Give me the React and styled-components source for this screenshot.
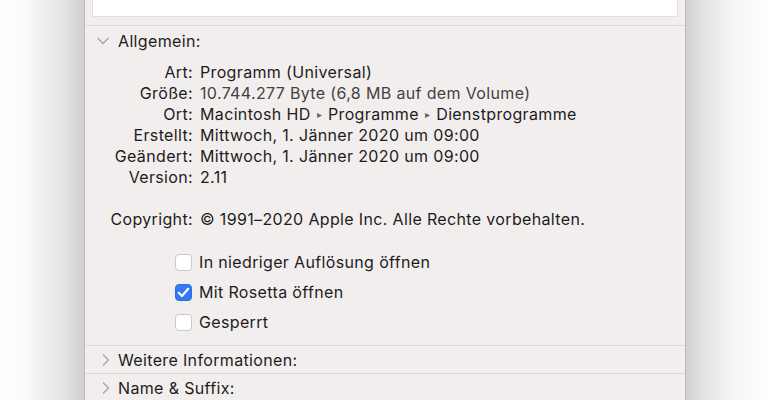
import React from 'react';
import styled, { createGlobalStyle } from 'styled-components';

const GlobalStyle = createGlobalStyle`
  html, body {
    margin: 0;
    padding: 0;
    background: #ffffff;
  }
  body {
    font-family: Inter, "Noto Sans", "Liberation Sans", sans-serif;
    -webkit-font-smoothing: antialiased;
  }
`;

const info = [
  { label: 'Art', value: 'Programm (Universal)' },
  { label: 'Größe', value: '10.744.277 Byte (6,8 MB auf dem Volume)', muted: true },
  { label: 'Ort', path: ['Macintosh HD', 'Programme', 'Dienstprogramme'] },
  { label: 'Erstellt', value: 'Mittwoch, 1. Jänner 2020 um 09:00' },
  { label: 'Geändert', value: 'Mittwoch, 1. Jänner 2020 um 09:00' },
  { label: 'Version', value: '2.11' },
  { spacer: true },
  { label: 'Copyright', value: '© 1991–2020 Apple Inc. Alle Rechte vorbehalten.' }
];

const options = [
  { label: 'In niedriger Auflösung öffnen', checked: false },
  { label: 'Mit Rosetta öffnen', checked: true },
  { label: 'Gesperrt', checked: false }
];

const Chevron = ({ open }) => (
  <ChevronBox open={open}>
    {open ? (
      <svg width="12" height="8" viewBox="0 0 12 8">
        <path d="M1 1.5 L6 6.5 L11 1.5" fill="none" stroke="#a9a5a5" strokeWidth="1.4" strokeLinecap="round" strokeLinejoin="round" />
      </svg>
    ) : (
      <svg width="8" height="12" viewBox="0 0 8 12">
        <path d="M1.5 1 L6.5 6 L1.5 11" fill="none" stroke="#a9a5a5" strokeWidth="1.4" strokeLinecap="round" strokeLinejoin="round" />
      </svg>
    )}
  </ChevronBox>
);

const Check = ({ checked }) => (
  <Box checked={checked}>
    {checked && (
      <svg width="13" height="11" viewBox="0 0 13 11">
        <path d="M1.8 5.8 L5 9 L11.2 1.8" fill="none" stroke="#ffffff" strokeWidth="2.2" strokeLinecap="round" strokeLinejoin="round" />
      </svg>
    )}
  </Box>
);

const App = () => (
  <>
    <GlobalStyle />
    <Page>
      <Shadow side="left" />
      <Panel>
        <TopArea>
          <Well />
        </TopArea>

        <Section>
          <Header>
            <Chevron open />
            <HeaderText>Allgemein:</HeaderText>
          </Header>

          <InfoGrid>
            {info.map((row, i) =>
              row.spacer ? (
                <Spacer key={i} />
              ) : (
                <React.Fragment key={row.label}>
                  <Label>{row.label}:</Label>
                  <Value muted={row.muted}>
                    {row.path
                      ? row.path.map((p, j) => (
                          <React.Fragment key={p}>
                            {j > 0 && <Arrow>▸</Arrow>}
                            {p}
                          </React.Fragment>
                        ))
                      : row.value}
                  </Value>
                </React.Fragment>
              )
            )}
          </InfoGrid>

          <Options>
            {options.map(o => (
              <Option key={o.label}>
                <Check checked={o.checked} />
                {o.label}
              </Option>
            ))}
          </Options>
        </Section>

        <Collapsed>
          <Chevron />
          <HeaderText>Weitere Informationen:</HeaderText>
        </Collapsed>
        <Collapsed>
          <Chevron />
          <HeaderText>Name &amp; Suffix:</HeaderText>
        </Collapsed>
      </Panel>
      <Shadow side="right" />
    </Page>
  </>
);

export default App;

const Page = styled.div`
  display: flex;
  width: 770px;
  height: 400px;
  overflow: hidden;
`;

const Shadow = styled.div`
  flex: ${p => (p.side === 'left' ? '0 0 84px' : '1')};
  background: ${p =>
    p.side === 'left'
      ? 'linear-gradient(to right, #ffffff 0%, #fafafa 30%, #e4e4e4 75%, #cfcfcf 100%)'
      : 'linear-gradient(to right, #d0d0d0 0%, #e6e6e6 25%, #f7f7f7 60%, #ffffff 100%)'};
`;

const Panel = styled.div`
  flex: 0 0 600px;
  display: flex;
  flex-direction: column;
  background: #f3eeee;
  border-left: 1px solid #bdb9b9;
  border-right: 1px solid #bdb9b9;
  color: #1c1c1c;
  font-size: 16px;
  letter-spacing: 0.35px;
`;

const TopArea = styled.div`
  padding: 0 7px 8px;
  border-bottom: 1px solid #dcd7d7;
`;

const Well = styled.div`
  height: 16px;
  background: #ffffff;
  border: 1px solid #e2dede;
  border-top: none;
`;

const Section = styled.div`
  padding: 5px 0 8px;
`;

const Header = styled.div`
  display: flex;
  align-items: center;
  height: 20px;
  padding-left: 12px;
`;

const ChevronBox = styled.span`
  display: inline-flex;
  align-items: center;
  justify-content: center;
  width: 12px;
  margin-left: ${p => (p.open ? '0' : '3px')};
  margin-right: ${p => (p.open ? '9px' : '6px')};
`;

const HeaderText = styled.span`
  line-height: 20px;
`;

const InfoGrid = styled.div`
  display: grid;
  grid-template-columns: 108px 1fr;
  column-gap: 7px;
  margin-top: 10px;
  grid-auto-rows: 21px;
  align-items: center;
`;

const Label = styled.span`
  text-align: right;
  white-space: nowrap;
`;

const Value = styled.span`
  white-space: nowrap;
  color: ${p => (p.muted ? '#444141' : '#1c1c1c')};
`;

const Arrow = styled.span`
  display: inline-block;
  margin: 0 6px;
  font-size: 10px;
  color: #666;
  vertical-align: 2px;
`;

const Spacer = styled.div`
  grid-column: 1 / -1;
`;

const Options = styled.div`
  display: flex;
  flex-direction: column;
  margin-top: 18px;
  padding-left: 90px;
`;

const Option = styled.label`
  display: flex;
  align-items: center;
  gap: 7px;
  height: 30px;
`;

const Box = styled.span`
  box-sizing: border-box;
  display: inline-flex;
  align-items: center;
  justify-content: center;
  width: 17px;
  height: 17px;
  border-radius: 4px;
  background: ${p => (p.checked ? '#3478f6' : '#ffffff')};
  border: 1px solid ${p => (p.checked ? '#2f6fe0' : '#cdc8c8')};
`;

const Collapsed = styled.div`
  display: flex;
  align-items: center;
  box-sizing: border-box;
  height: 30px;
  padding: 2px 0 0 12px;
  border-top: 1px solid #dcd7d7;
`;
